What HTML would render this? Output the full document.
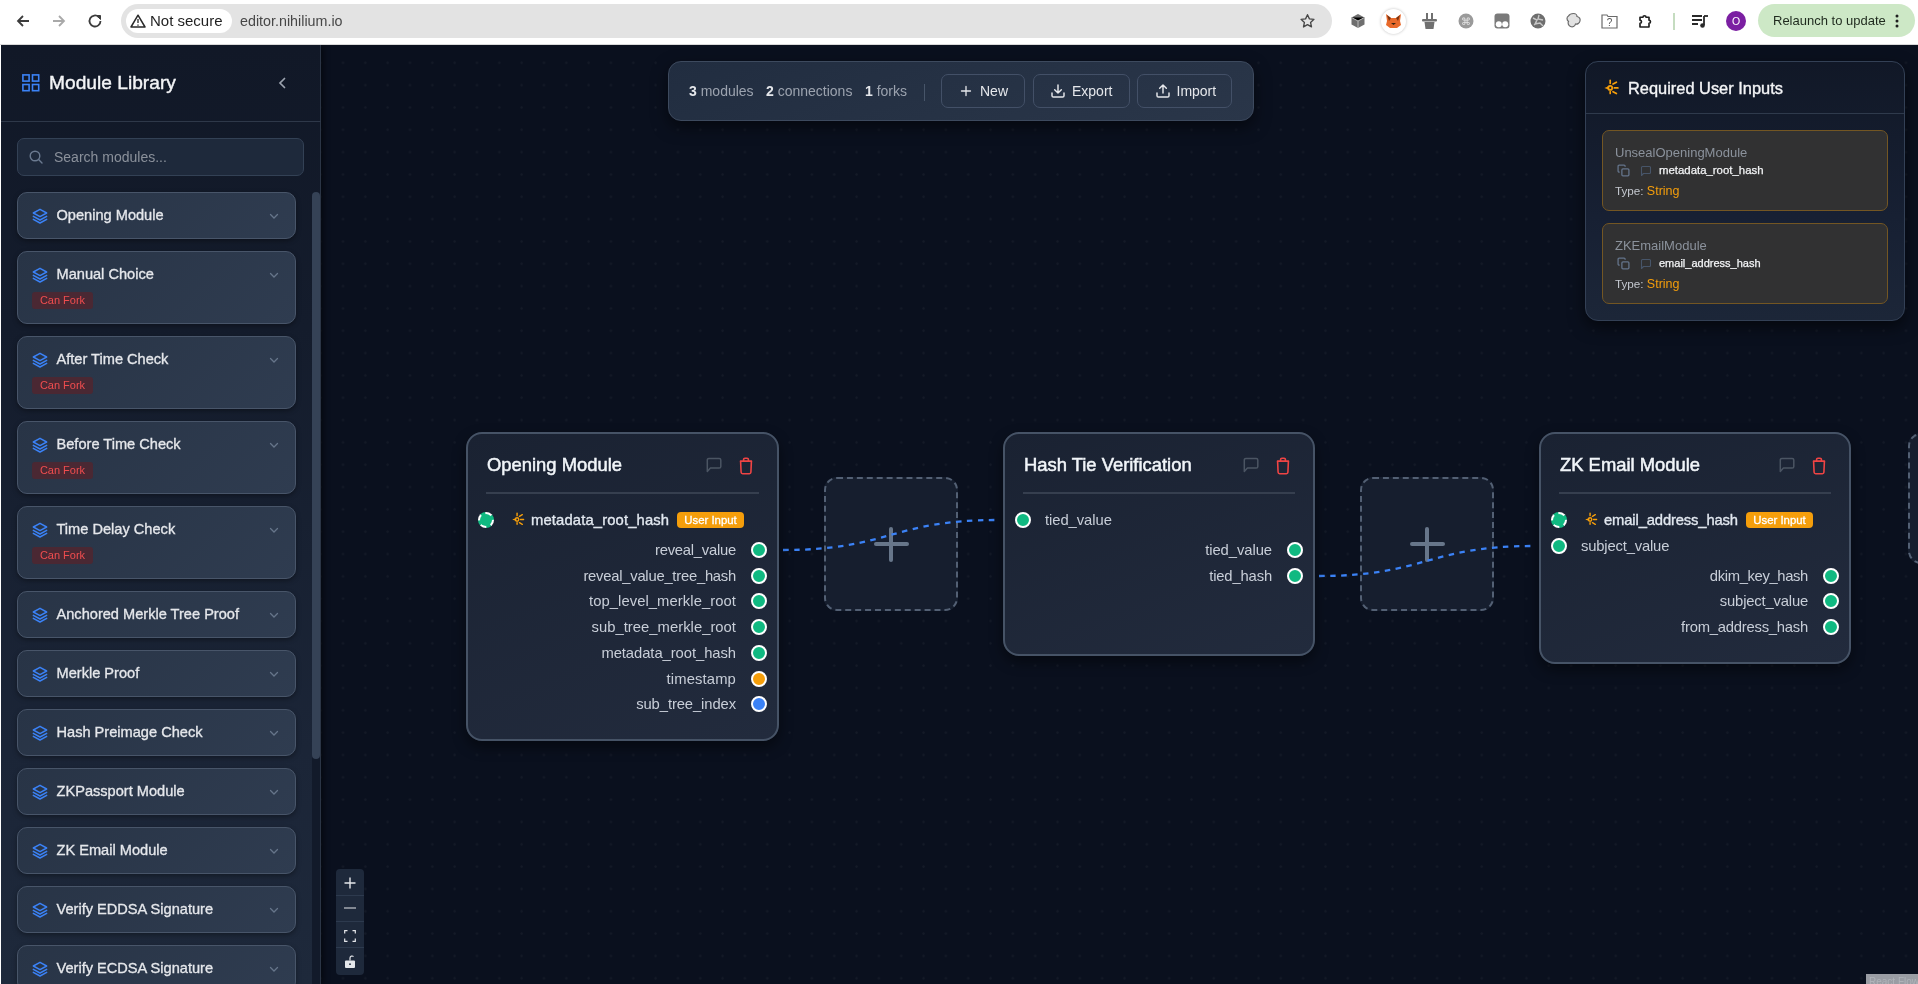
<!DOCTYPE html><html><head><meta charset="utf-8"><style>
*{box-sizing:border-box;margin:0;padding:0}
html,body{width:1918px;height:984px;overflow:hidden;background:#fff;font-family:"Liberation Sans",sans-serif;-webkit-font-smoothing:antialiased}
#chrome,#app{will-change:transform}
.a{position:absolute}
svg{position:absolute;overflow:visible}
#chrome{position:absolute;left:0;top:0;width:1918px;height:44px;background:#fff}
#chline{position:absolute;left:0;top:44px;width:1918px;height:1px;background:#d9d9d9}
#app{position:absolute;left:1px;top:45px;width:1917px;height:939px;background:#0a101e;overflow:hidden}
#canvas{position:absolute;left:320px;top:0;width:1597px;height:939px;background-color:#0a101e;
 background-image:radial-gradient(circle at 1.5px 1.5px,#141a27 0.8px,transparent 1.6px);
 background-size:22.34px 22.34px;background-position:20.5px 16.3px}
#sidebar{position:absolute;left:0;top:0;width:320px;height:939px;background:linear-gradient(#111827 0%,#141c2c 30%,#1b2537 75%,#1e293b 100%);border-right:1px solid #2b3545;box-shadow:3px 0 6px rgba(0,0,0,.45)}
.card{position:absolute;left:16px;width:279px;border:1px solid #485569;border-radius:10px;background:linear-gradient(135deg,#283446,#2f3c50);box-shadow:0 2px 5px rgba(0,0,0,.35)}
.ct{position:absolute;left:38.5px;font-size:14.6px;color:#e5e7eb;white-space:nowrap;-webkit-text-stroke:0.32px #e5e7eb}
.fork{position:absolute;left:14px;width:61px;height:17px;border-radius:3px;background:#4a2833;color:#f04d4f;font-size:11px;line-height:17px;text-align:center}
.node{position:absolute;border:2px solid #465366;border-radius:16px;background:linear-gradient(160deg,#1a2232,#222b3d);box-shadow:0 6px 14px rgba(0,0,0,.45)}
.nt{position:absolute;font-size:18.4px;color:#f1f5f9;white-space:nowrap;line-height:20px;-webkit-text-stroke:0.5px #f1f5f9}
.dv{position:absolute;height:2px;background:#363f4f}
.h{position:absolute;width:16px;height:16px;border-radius:50%;background:#10b981;border:2px solid #fff}
.lbl{position:absolute;font-size:14.8px;color:#c8ced8;white-space:nowrap;line-height:18px}
.lb{color:#e2e8f0;font-size:14.8px;-webkit-text-stroke:0.34px #e2e8f0}
.ui{position:absolute;height:16px;border-radius:4px;background:#f59e0b;color:#fff;font-size:11.4px;line-height:16px;text-align:center;-webkit-text-stroke:0.3px #fff}
.ph{position:absolute;width:134px;height:134px;border:2px dashed #536074;border-radius:13px;background:#161e2e}
.btn{position:absolute;top:12px;height:34px;border:1px solid #435067;border-radius:7px;color:#e5e7eb;font-size:14px;line-height:32px}
</style></head><body>
<div id="chrome">
<svg style="left:15px;top:13px" width="16" height="16" viewBox="0 0 16 16"><path d="M14 8H3M8 3L3 8l5 5" fill="none" stroke="#3c3c3c" stroke-width="1.8"/></svg>
<svg style="left:51px;top:13px" width="16" height="16" viewBox="0 0 16 16"><path d="M2 8h11M8 3l5 5-5 5" fill="none" stroke="#a9a9a9" stroke-width="1.8"/></svg>
<svg style="left:87px;top:13px" width="16" height="16" viewBox="0 0 16 16"><path d="M13.5 8A5.5 5.5 0 1 1 11.8 4" fill="none" stroke="#3c3c3c" stroke-width="1.8"/><path d="M9.5 2.5h4v4z" fill="#3c3c3c" stroke="#3c3c3c" stroke-width="1"/></svg>
<div class="a" style="left:121px;top:4px;width:1211px;height:34px;border-radius:17px;background:#e3e3e3"></div>
<div class="a" style="left:126px;top:9px;width:106px;height:24px;border-radius:12px;background:#fff"></div>
<svg style="left:130px;top:14px" width="16" height="14" viewBox="0 0 16 14"><path d="M8 1.2L15 13H1z" fill="none" stroke="#2a2a2a" stroke-width="1.5" stroke-linejoin="round"/><path d="M8 5v4M8 10.5v1.3" stroke="#2a2a2a" stroke-width="1.3"/></svg>
<div class="a" style="left:150px;top:12px;font-size:15px;color:#1f1f1f;line-height:18px">Not secure</div>
<div class="a" style="left:240px;top:12px;font-size:14.3px;color:#474747;line-height:18px">editor.nihilium.io</div>
<svg style="left:1299px;top:13px" width="17" height="16" viewBox="0 0 24 24"><path d="M12 2.5l2.9 6.3 6.8.7-5.1 4.6 1.4 6.8L12 17.4l-6 3.5 1.4-6.8-5.1-4.6 6.8-.7z" fill="none" stroke="#474747" stroke-width="2" stroke-linejoin="round"/></svg>
<svg style="left:1350px;top:13px" width="16" height="16" viewBox="0 0 16 16"><path d="M8 1l6.5 3.5v7L8 15 1.5 11.5v-7z" fill="#6f6f6f"/><path d="M1.5 4.5L8 8l6.5-3.5M8 8v7" stroke="#bdbdbd" stroke-width="1"/></svg>
<div class="a" style="left:1381px;top:9px;width:25px;height:25px;border-radius:50%;background:#fff;box-shadow:0 0 3px rgba(0,0,0,.25)"></div>
<svg style="left:1385px;top:13px" width="17" height="16" viewBox="0 0 17 16"><path d="M1 1l5 4h5l5-4-1 7 1 4-4 3H5l-4-3 1-4z" fill="#e8692a"/><path d="M2 2l4 3-2 3zM15 2l-4 3 2 3z" fill="#7a3412"/><path d="M6 10l2.5 2 2.5-2" fill="#3a2410"/></svg>
<svg style="left:1421px;top:12px" width="17" height="18" viewBox="0 0 17 18"><path d="M5 1h2v6H5zM10 1h2v6h-2z" fill="#707070"/><rect x="1" y="7" width="15" height="2.5" rx="1" fill="#707070"/><path d="M3.5 10h10l-1 7h-8z" fill="#707070"/></svg>
<svg style="left:1458px;top:13px" width="16" height="16" viewBox="0 0 16 16"><circle cx="8" cy="8" r="7.5" fill="#9a9a9a"/><text x="8" y="12" font-size="10" text-anchor="middle" fill="#e5e5e5" font-family="Liberation Sans">&#8984;</text></svg>
<svg style="left:1494px;top:13px" width="16" height="16" viewBox="0 0 16 16"><rect x="0.5" y="0.5" width="15" height="15" rx="3" fill="#7a7a7a"/><circle cx="4.8" cy="11.2" r="3" fill="#fff"/><circle cx="11.2" cy="11.2" r="3" fill="#fff"/></svg>
<svg style="left:1530px;top:13px" width="16" height="16" viewBox="0 0 16 16"><circle cx="8" cy="8" r="7.5" fill="#6e6e6e"/><path d="M3 5l4 2-2 4 5-1 3 3M9 2l-1 4 5 1M4 12l3-2" stroke="#c8c8c8" stroke-width="1.4" fill="none"/></svg>
<svg style="left:1565px;top:12px" width="17" height="17" viewBox="0 0 17 17"><path d="M8.5 1.5c2.5 0 3.5 2 3.5 3 2.5.5 3.5 2.5 3 4.5-.5 2.5-3 3.5-4.5 3-.5 2.5-3 3.5-5 2.5S2.5 11 3.5 9.5C1.5 8 1.5 5 3.5 4c1-1.8 2.8-2.5 5-2.5z" fill="#e2e2e2" stroke="#6a6a6a" stroke-width="1.2"/></svg>
<svg style="left:1601px;top:12px" width="17" height="17" viewBox="0 0 17 17"><path d="M1 3h5l1 1.5h9V16H1z" fill="none" stroke="#6a6a6a" stroke-width="1.2"/><text x="8.5" y="14" font-size="10" text-anchor="middle" fill="#555" font-family="Liberation Sans">?</text></svg>
<svg style="left:1637px;top:12px" width="18" height="18" viewBox="0 0 24 24"><path d="M4 7h4a2 2 0 1 1 4 0h4v4a2 2 0 1 1 0 4v5H4v-5a2 2 0 1 0 0-4z" fill="none" stroke="#1f1f1f" stroke-width="2.2" stroke-linejoin="round"/></svg>
<div class="a" style="left:1673px;top:13px;width:1.5px;height:17px;background:#c5dcc0"></div>
<svg style="left:1691px;top:13px" width="18" height="16" viewBox="0 0 18 16"><path d="M1 3h10M1 7h10M1 11h6" stroke="#2a2a2a" stroke-width="1.8"/><path d="M13 3v9" stroke="#2a2a2a" stroke-width="1.8"/><circle cx="11.5" cy="12.5" r="2.3" fill="#2a2a2a"/><path d="M13 3h4" stroke="#2a2a2a" stroke-width="1.8"/></svg>
<div class="a" style="left:1726px;top:11px;width:20px;height:20px;border-radius:50%;background:#7b1fa2;color:#fff;font-size:10.5px;line-height:20px;text-align:center">O</div>
<div class="a" style="left:1758px;top:4px;width:157px;height:33px;border-radius:17px;background:#cde8c6"></div>
<div class="a" style="left:1773px;top:13px;font-size:13px;color:#1f2a1e;line-height:16px">Relaunch to update</div>
<svg style="left:1895px;top:14px" width="4" height="14" viewBox="0 0 4 14"><circle cx="2" cy="2" r="1.5" fill="#1f1f1f"/><circle cx="2" cy="7" r="1.5" fill="#1f1f1f"/><circle cx="2" cy="12" r="1.5" fill="#1f1f1f"/></svg>
</div><div id="chline"></div>
<div id="app">
<div id="canvas"></div>
<div id="sidebar">
<svg style="left:21px;top:29px" width="18" height="18" viewBox="0 0 18 18"><g fill="none" stroke="#3b82f6" stroke-width="1.6"><rect x="0.9" y="0.9" width="6.2" height="6.2"/><rect x="10.5" y="0.9" width="6.2" height="6.2"/><rect x="0.9" y="10.5" width="6.2" height="6.2"/><rect x="10.5" y="10.5" width="6.2" height="6.2"/></g></svg>
<div class="a" style="left:48px;top:27px;font-size:19.2px;color:#f3f4f6;line-height:22px;-webkit-text-stroke:0.4px #f3f4f6">Module Library</div>
<svg style="left:276px;top:32px" width="10" height="12" viewBox="0 0 10 12"><path d="M7.5 1.5L3 6l4.5 4.5" fill="none" stroke="#9ca3af" stroke-width="1.7" stroke-linecap="round"/></svg>
<div class="a" style="left:0;top:76px;width:320px;height:1px;background:#2e3849"></div>
<div class="a" style="left:16px;top:93px;width:287px;height:38px;border:1px solid #334155;border-radius:7px;background:#1e293b"></div>
<svg style="left:28px;top:105px" width="14" height="14" viewBox="0 0 14 14"><circle cx="6" cy="6" r="4.8" fill="none" stroke="#6b7a90" stroke-width="1.4"/><path d="M9.6 9.6L13 13" stroke="#6b7a90" stroke-width="1.4" stroke-linecap="round"/></svg>
<div class="a" style="left:53px;top:104px;font-size:14px;color:#8b919b;line-height:16px">Search modules...</div>
<div class="a" style="left:311px;top:147px;width:8px;height:800px;background:#121a2a"></div>
<div class="a" style="left:311px;top:147px;width:8px;height:567px;border-radius:4px;background:#354256"></div>
<div class="card" style="top:147px;height:47px">
<svg style="left:14px;top:15px" width="16" height="16" viewBox="0 0 24 24"><g fill="none" stroke="#3b82f6" stroke-width="2.2" stroke-linecap="round" stroke-linejoin="round"><path d="M12 2L2 7.5 12 13l10-5.5z"/><path d="M2 12.5L12 18l10-5.5"/><path d="M2 17L12 22.5 22 17"/></g></svg>
<div class="ct" style="top:14px;line-height:16px">Opening Module</div>
<svg style="left:251px;top:20px" width="10" height="7" viewBox="0 0 10 7"><path d="M1.5 1.5l3.5 3.5 3.5-3.5" fill="none" stroke="#66758a" stroke-width="1.3" stroke-linecap="round"/></svg>
</div>
<div class="card" style="top:206px;height:73px">
<svg style="left:14px;top:15px" width="16" height="16" viewBox="0 0 24 24"><g fill="none" stroke="#3b82f6" stroke-width="2.2" stroke-linecap="round" stroke-linejoin="round"><path d="M12 2L2 7.5 12 13l10-5.5z"/><path d="M2 12.5L12 18l10-5.5"/><path d="M2 17L12 22.5 22 17"/></g></svg>
<div class="ct" style="top:14px;line-height:16px">Manual Choice</div>
<svg style="left:251px;top:20px" width="10" height="7" viewBox="0 0 10 7"><path d="M1.5 1.5l3.5 3.5 3.5-3.5" fill="none" stroke="#66758a" stroke-width="1.3" stroke-linecap="round"/></svg>
<div class="fork" style="top:40px">Can Fork</div>
</div>
<div class="card" style="top:291px;height:73px">
<svg style="left:14px;top:15px" width="16" height="16" viewBox="0 0 24 24"><g fill="none" stroke="#3b82f6" stroke-width="2.2" stroke-linecap="round" stroke-linejoin="round"><path d="M12 2L2 7.5 12 13l10-5.5z"/><path d="M2 12.5L12 18l10-5.5"/><path d="M2 17L12 22.5 22 17"/></g></svg>
<div class="ct" style="top:14px;line-height:16px">After Time Check</div>
<svg style="left:251px;top:20px" width="10" height="7" viewBox="0 0 10 7"><path d="M1.5 1.5l3.5 3.5 3.5-3.5" fill="none" stroke="#66758a" stroke-width="1.3" stroke-linecap="round"/></svg>
<div class="fork" style="top:40px">Can Fork</div>
</div>
<div class="card" style="top:376px;height:73px">
<svg style="left:14px;top:15px" width="16" height="16" viewBox="0 0 24 24"><g fill="none" stroke="#3b82f6" stroke-width="2.2" stroke-linecap="round" stroke-linejoin="round"><path d="M12 2L2 7.5 12 13l10-5.5z"/><path d="M2 12.5L12 18l10-5.5"/><path d="M2 17L12 22.5 22 17"/></g></svg>
<div class="ct" style="top:14px;line-height:16px">Before Time Check</div>
<svg style="left:251px;top:20px" width="10" height="7" viewBox="0 0 10 7"><path d="M1.5 1.5l3.5 3.5 3.5-3.5" fill="none" stroke="#66758a" stroke-width="1.3" stroke-linecap="round"/></svg>
<div class="fork" style="top:40px">Can Fork</div>
</div>
<div class="card" style="top:461px;height:73px">
<svg style="left:14px;top:15px" width="16" height="16" viewBox="0 0 24 24"><g fill="none" stroke="#3b82f6" stroke-width="2.2" stroke-linecap="round" stroke-linejoin="round"><path d="M12 2L2 7.5 12 13l10-5.5z"/><path d="M2 12.5L12 18l10-5.5"/><path d="M2 17L12 22.5 22 17"/></g></svg>
<div class="ct" style="top:14px;line-height:16px">Time Delay Check</div>
<svg style="left:251px;top:20px" width="10" height="7" viewBox="0 0 10 7"><path d="M1.5 1.5l3.5 3.5 3.5-3.5" fill="none" stroke="#66758a" stroke-width="1.3" stroke-linecap="round"/></svg>
<div class="fork" style="top:40px">Can Fork</div>
</div>
<div class="card" style="top:546px;height:47px">
<svg style="left:14px;top:15px" width="16" height="16" viewBox="0 0 24 24"><g fill="none" stroke="#3b82f6" stroke-width="2.2" stroke-linecap="round" stroke-linejoin="round"><path d="M12 2L2 7.5 12 13l10-5.5z"/><path d="M2 12.5L12 18l10-5.5"/><path d="M2 17L12 22.5 22 17"/></g></svg>
<div class="ct" style="top:14px;line-height:16px">Anchored Merkle Tree Proof</div>
<svg style="left:251px;top:20px" width="10" height="7" viewBox="0 0 10 7"><path d="M1.5 1.5l3.5 3.5 3.5-3.5" fill="none" stroke="#66758a" stroke-width="1.3" stroke-linecap="round"/></svg>
</div>
<div class="card" style="top:605px;height:47px">
<svg style="left:14px;top:15px" width="16" height="16" viewBox="0 0 24 24"><g fill="none" stroke="#3b82f6" stroke-width="2.2" stroke-linecap="round" stroke-linejoin="round"><path d="M12 2L2 7.5 12 13l10-5.5z"/><path d="M2 12.5L12 18l10-5.5"/><path d="M2 17L12 22.5 22 17"/></g></svg>
<div class="ct" style="top:14px;line-height:16px">Merkle Proof</div>
<svg style="left:251px;top:20px" width="10" height="7" viewBox="0 0 10 7"><path d="M1.5 1.5l3.5 3.5 3.5-3.5" fill="none" stroke="#66758a" stroke-width="1.3" stroke-linecap="round"/></svg>
</div>
<div class="card" style="top:664px;height:47px">
<svg style="left:14px;top:15px" width="16" height="16" viewBox="0 0 24 24"><g fill="none" stroke="#3b82f6" stroke-width="2.2" stroke-linecap="round" stroke-linejoin="round"><path d="M12 2L2 7.5 12 13l10-5.5z"/><path d="M2 12.5L12 18l10-5.5"/><path d="M2 17L12 22.5 22 17"/></g></svg>
<div class="ct" style="top:14px;line-height:16px">Hash Preimage Check</div>
<svg style="left:251px;top:20px" width="10" height="7" viewBox="0 0 10 7"><path d="M1.5 1.5l3.5 3.5 3.5-3.5" fill="none" stroke="#66758a" stroke-width="1.3" stroke-linecap="round"/></svg>
</div>
<div class="card" style="top:723px;height:47px">
<svg style="left:14px;top:15px" width="16" height="16" viewBox="0 0 24 24"><g fill="none" stroke="#3b82f6" stroke-width="2.2" stroke-linecap="round" stroke-linejoin="round"><path d="M12 2L2 7.5 12 13l10-5.5z"/><path d="M2 12.5L12 18l10-5.5"/><path d="M2 17L12 22.5 22 17"/></g></svg>
<div class="ct" style="top:14px;line-height:16px">ZKPassport Module</div>
<svg style="left:251px;top:20px" width="10" height="7" viewBox="0 0 10 7"><path d="M1.5 1.5l3.5 3.5 3.5-3.5" fill="none" stroke="#66758a" stroke-width="1.3" stroke-linecap="round"/></svg>
</div>
<div class="card" style="top:782px;height:47px">
<svg style="left:14px;top:15px" width="16" height="16" viewBox="0 0 24 24"><g fill="none" stroke="#3b82f6" stroke-width="2.2" stroke-linecap="round" stroke-linejoin="round"><path d="M12 2L2 7.5 12 13l10-5.5z"/><path d="M2 12.5L12 18l10-5.5"/><path d="M2 17L12 22.5 22 17"/></g></svg>
<div class="ct" style="top:14px;line-height:16px">ZK Email Module</div>
<svg style="left:251px;top:20px" width="10" height="7" viewBox="0 0 10 7"><path d="M1.5 1.5l3.5 3.5 3.5-3.5" fill="none" stroke="#66758a" stroke-width="1.3" stroke-linecap="round"/></svg>
</div>
<div class="card" style="top:841px;height:47px">
<svg style="left:14px;top:15px" width="16" height="16" viewBox="0 0 24 24"><g fill="none" stroke="#3b82f6" stroke-width="2.2" stroke-linecap="round" stroke-linejoin="round"><path d="M12 2L2 7.5 12 13l10-5.5z"/><path d="M2 12.5L12 18l10-5.5"/><path d="M2 17L12 22.5 22 17"/></g></svg>
<div class="ct" style="top:14px;line-height:16px">Verify EDDSA Signature</div>
<svg style="left:251px;top:20px" width="10" height="7" viewBox="0 0 10 7"><path d="M1.5 1.5l3.5 3.5 3.5-3.5" fill="none" stroke="#66758a" stroke-width="1.3" stroke-linecap="round"/></svg>
</div>
<div class="card" style="top:900px;height:47px">
<svg style="left:14px;top:15px" width="16" height="16" viewBox="0 0 24 24"><g fill="none" stroke="#3b82f6" stroke-width="2.2" stroke-linecap="round" stroke-linejoin="round"><path d="M12 2L2 7.5 12 13l10-5.5z"/><path d="M2 12.5L12 18l10-5.5"/><path d="M2 17L12 22.5 22 17"/></g></svg>
<div class="ct" style="top:14px;line-height:16px">Verify ECDSA Signature</div>
<svg style="left:251px;top:20px" width="10" height="7" viewBox="0 0 10 7"><path d="M1.5 1.5l3.5 3.5 3.5-3.5" fill="none" stroke="#66758a" stroke-width="1.3" stroke-linecap="round"/></svg>
</div>
</div>
<div class="ph" style="left:823px;top:432px"></div>
<div class="a" style="left:873px;top:497px;width:35px;height:4px;border-radius:2px;background:#67768a"></div>
<div class="a" style="left:888px;top:482px;width:4px;height:35px;border-radius:2px;background:#67768a"></div>
<div class="ph" style="left:1359px;top:432px"></div>
<div class="a" style="left:1409px;top:497px;width:35px;height:4px;border-radius:2px;background:#67768a"></div>
<div class="a" style="left:1424px;top:482px;width:4px;height:35px;border-radius:2px;background:#67768a"></div>
<div class="a" style="left:1907px;top:388px;width:60px;height:131px;border:2px dashed #536074;border-radius:13px;background:#161e2e"></div>
<svg style="left:0;top:0" width="1917" height="939"><g fill="none" stroke="#3b82f6" stroke-width="2.3" stroke-dasharray="5.5 5.5"><path d="M782,505 C889.5,505 889.5,475 997,475"/><path d="M1318,531 C1425.5,531 1425.5,501 1533,501"/></g></svg>
<div class="node" style="left:465px;top:387px;width:313px;height:309px"></div>
<div class="nt" style="left:486px;top:410px">Opening Module</div>
<svg style="left:705px;top:412px" width="16" height="16" viewBox="0 0 16 16"><path d="M1.3 14.5V3a1.6 1.6 0 0 1 1.6-1.6h10.3A1.6 1.6 0 0 1 14.8 3v6.4a1.6 1.6 0 0 1-1.6 1.6H4.4z" fill="none" stroke="#4b5563" stroke-width="1.5" stroke-linejoin="round"/></svg>
<svg style="left:738px;top:412px" width="14" height="18" viewBox="0 0 14 18"><g fill="none" stroke="#ef4444" stroke-width="1.6" stroke-linejoin="round"><path d="M1.6 4.3h10.8l-.5 11a1.5 1.5 0 0 1-1.5 1.4H3.6a1.5 1.5 0 0 1-1.5-1.4z"/><path d="M0.9 4.3h12.2M4.6 4.3V2.6a1.3 1.3 0 0 1 1.3-1.3h2.2a1.3 1.3 0 0 1 1.3 1.3v1.7"/></g></svg>
<div class="dv" style="left:485px;top:447px;width:273px"></div>
<div class="h" style="left:477px;top:467px;border-style:dashed"></div>
<svg style="left:510px;top:467px" width="13.5" height="13.5" viewBox="0 0 16 16"><g stroke="#f59e0b" stroke-width="1.7" stroke-linecap="round" fill="none"><circle cx="7.2" cy="8.9" r="2"/><path d="M7.2 1.3v3M7.2 12.6v1.9M11.3 8.9h3.6M10 5.1l3.4-1.9M10 12.7l3.4 1.9"/></g><path d="M6.2 7.1L1.4 8.9L6.2 10.7z" fill="#f59e0b"/></svg>
<div class="lbl lb" style="left:530px;top:466px;letter-spacing:0.137px">metadata_root_hash</div>
<div class="ui" style="left:676px;top:467px;width:67px">User Input</div>
<div class="h" style="left:750px;top:497px;background:#10b981"></div>
<div class="lbl" style="right:1182px;top:496px;letter-spacing:-0.245px">reveal_value</div>
<div class="h" style="left:750px;top:523px;background:#10b981"></div>
<div class="lbl" style="right:1182px;top:522px;letter-spacing:-0.243px">reveal_value_tree_hash</div>
<div class="h" style="left:750px;top:548px;background:#10b981"></div>
<div class="lbl" style="right:1182px;top:547px;letter-spacing:0.068px">top_level_merkle_root</div>
<div class="h" style="left:750px;top:574px;background:#10b981"></div>
<div class="lbl" style="right:1182px;top:573px;letter-spacing:0.026px">sub_tree_merkle_root</div>
<div class="h" style="left:750px;top:600px;background:#10b981"></div>
<div class="lbl" style="right:1182px;top:599px;letter-spacing:-0.063px">metadata_root_hash</div>
<div class="h" style="left:750px;top:626px;background:#f59e0b"></div>
<div class="lbl" style="right:1182px;top:625px;letter-spacing:0.134px">timestamp</div>
<div class="h" style="left:750px;top:651px;background:#3b82f6"></div>
<div class="lbl" style="right:1182px;top:650px;letter-spacing:-0.099px">sub_tree_index</div>
<div class="node" style="left:1002px;top:387px;width:312px;height:224px"></div>
<div class="nt" style="left:1023px;top:410px">Hash Tie Verification</div>
<svg style="left:1242px;top:412px" width="16" height="16" viewBox="0 0 16 16"><path d="M1.3 14.5V3a1.6 1.6 0 0 1 1.6-1.6h10.3A1.6 1.6 0 0 1 14.8 3v6.4a1.6 1.6 0 0 1-1.6 1.6H4.4z" fill="none" stroke="#4b5563" stroke-width="1.5" stroke-linejoin="round"/></svg>
<svg style="left:1275px;top:412px" width="14" height="18" viewBox="0 0 14 18"><g fill="none" stroke="#ef4444" stroke-width="1.6" stroke-linejoin="round"><path d="M1.6 4.3h10.8l-.5 11a1.5 1.5 0 0 1-1.5 1.4H3.6a1.5 1.5 0 0 1-1.5-1.4z"/><path d="M0.9 4.3h12.2M4.6 4.3V2.6a1.3 1.3 0 0 1 1.3-1.3h2.2a1.3 1.3 0 0 1 1.3 1.3v1.7"/></g></svg>
<div class="dv" style="left:1022px;top:447px;width:272px"></div>
<div class="h" style="left:1014px;top:467px"></div>
<div class="lbl" style="left:1044px;top:466px;letter-spacing:-0.065px">tied_value</div>
<div class="h" style="left:1286px;top:497px;background:#10b981"></div>
<div class="lbl" style="right:646px;top:496px;letter-spacing:-0.065px">tied_value</div>
<div class="h" style="left:1286px;top:523px;background:#10b981"></div>
<div class="lbl" style="right:646px;top:522px;letter-spacing:-0.152px">tied_hash</div>
<div class="node" style="left:1538px;top:387px;width:312px;height:232px"></div>
<div class="nt" style="left:1559px;top:410px">ZK Email Module</div>
<svg style="left:1778px;top:412px" width="16" height="16" viewBox="0 0 16 16"><path d="M1.3 14.5V3a1.6 1.6 0 0 1 1.6-1.6h10.3A1.6 1.6 0 0 1 14.8 3v6.4a1.6 1.6 0 0 1-1.6 1.6H4.4z" fill="none" stroke="#4b5563" stroke-width="1.5" stroke-linejoin="round"/></svg>
<svg style="left:1811px;top:412px" width="14" height="18" viewBox="0 0 14 18"><g fill="none" stroke="#ef4444" stroke-width="1.6" stroke-linejoin="round"><path d="M1.6 4.3h10.8l-.5 11a1.5 1.5 0 0 1-1.5 1.4H3.6a1.5 1.5 0 0 1-1.5-1.4z"/><path d="M0.9 4.3h12.2M4.6 4.3V2.6a1.3 1.3 0 0 1 1.3-1.3h2.2a1.3 1.3 0 0 1 1.3 1.3v1.7"/></g></svg>
<div class="dv" style="left:1558px;top:447px;width:272px"></div>
<div class="h" style="left:1550px;top:467px;border-style:dashed"></div>
<svg style="left:1583px;top:467px" width="13.5" height="13.5" viewBox="0 0 16 16"><g stroke="#f59e0b" stroke-width="1.7" stroke-linecap="round" fill="none"><circle cx="7.2" cy="8.9" r="2"/><path d="M7.2 1.3v3M7.2 12.6v1.9M11.3 8.9h3.6M10 5.1l3.4-1.9M10 12.7l3.4 1.9"/></g><path d="M6.2 7.1L1.4 8.9L6.2 10.7z" fill="#f59e0b"/></svg>
<div class="lbl lb" style="left:1603px;top:466px;letter-spacing:-0.144px">email_address_hash</div>
<div class="ui" style="left:1745px;top:467px;width:67px">User Input</div>
<div class="h" style="left:1550px;top:493px"></div>
<div class="lbl" style="left:1580px;top:492px;letter-spacing:-0.176px">subject_value</div>
<div class="h" style="left:1822px;top:523px;background:#10b981"></div>
<div class="lbl" style="right:110px;top:522px;letter-spacing:-0.358px">dkim_key_hash</div>
<div class="h" style="left:1822px;top:548px;background:#10b981"></div>
<div class="lbl" style="right:110px;top:547px;letter-spacing:-0.176px">subject_value</div>
<div class="h" style="left:1822px;top:574px;background:#10b981"></div>
<div class="lbl" style="right:110px;top:573px;letter-spacing:-0.228px">from_address_hash</div>
<div class="a" style="left:667px;top:16px;width:586px;height:60px;border:1px solid #3d4a5e;border-radius:13px;background:linear-gradient(160deg,#212d40,#2a3649);box-shadow:0 6px 16px rgba(0,0,0,.5)">
<div class="a" style="left:20px;top:21px;font-size:14px;color:#9ca3af;line-height:16px;white-space:nowrap"><b style="color:#e5e7eb">3</b> modules</div>
<div class="a" style="left:97px;top:21px;font-size:14px;color:#9ca3af;line-height:16px;white-space:nowrap"><b style="color:#e5e7eb">2</b> connections</div>
<div class="a" style="left:196px;top:21px;font-size:14px;color:#9ca3af;line-height:16px;white-space:nowrap"><b style="color:#e5e7eb">1</b> forks</div>
<div class="a" style="left:255px;top:22px;width:1px;height:17px;background:#475569"></div>
<div class="btn" style="left:272px;width:84px"></div>
<svg style="left:291.5px;top:24px" width="10" height="10" viewBox="0 0 10 10"><path d="M5 0.5v9M0.5 5h9" stroke="#e5e7eb" stroke-width="1.3" stroke-linecap="round"/></svg>
<div class="a" style="left:311px;top:21px;font-size:14px;color:#e5e7eb;line-height:16px">New</div>
<div class="btn" style="left:364px;width:97px"></div>
<svg style="left:380.5px;top:21px" width="16" height="16" viewBox="0 0 24 24"><g fill="none" stroke="#e5e7eb" stroke-width="2.2" stroke-linecap="round" stroke-linejoin="round"><path d="M21 15v4a2 2 0 0 1-2 2H5a2 2 0 0 1-2-2v-4"/><path d="M7 10l5 5 5-5M12 15V3"/></g></svg>
<div class="a" style="left:403px;top:21px;font-size:14px;color:#e5e7eb;line-height:16px">Export</div>
<div class="btn" style="left:468px;width:95px"></div>
<svg style="left:485.5px;top:21px" width="16" height="16" viewBox="0 0 24 24"><g fill="none" stroke="#e5e7eb" stroke-width="2.2" stroke-linecap="round" stroke-linejoin="round"><path d="M21 15v4a2 2 0 0 1-2 2H5a2 2 0 0 1-2-2v-4"/><path d="M17 8l-5-5-5 5M12 3v12"/></g></svg>
<div class="a" style="left:507.5px;top:21px;font-size:14px;color:#e5e7eb;line-height:16px">Import</div>
</div>
<div class="a" style="left:1584px;top:16px;width:320px;height:260px;border:1px solid #334055;border-radius:13px;background:linear-gradient(#111827,#172033 60%,#1c2638);overflow:hidden;box-shadow:0 6px 16px rgba(0,0,0,.55)">
<div class="a" style="left:0;top:51px;width:320px;height:1px;background:#2f3a4c"></div>
<svg style="left:17px;top:17px" width="16" height="16" viewBox="0 0 16 16"><g stroke="#f59e0b" stroke-width="1.7" stroke-linecap="round" fill="none"><circle cx="7.2" cy="8.9" r="2"/><path d="M7.2 1.3v3M7.2 12.6v1.9M11.3 8.9h3.6M10 5.1l3.4-1.9M10 12.7l3.4 1.9"/></g><path d="M6.2 7.1L1.4 8.9L6.2 10.7z" fill="#f59e0b"/></svg>
<div class="a" style="left:42px;top:17px;font-size:16.4px;color:#f3f4f6;line-height:18px;-webkit-text-stroke:0.36px #f3f4f6">Required User Inputs</div>
<div class="a" style="left:16px;top:68px;width:286px;height:81px;border:1px solid #735623;border-radius:7px;background:#313132"></div>
<div class="a" style="left:29px;top:83px;font-size:13px;color:#8b929c;line-height:16px">UnsealOpeningModule</div>
<svg style="left:31px;top:102px" width="13" height="13" viewBox="0 0 24 24"><g fill="none" stroke="#64748b" stroke-width="2.4" stroke-linejoin="round"><rect x="9" y="9" width="13" height="13" rx="2"/><path d="M5 15H4a2 2 0 0 1-2-2V4a2 2 0 0 1 2-2h9a2 2 0 0 1 2 2v1"/></g></svg>
<svg style="left:54px;top:103px" width="12" height="12" viewBox="0 0 24 24"><path d="M21 15a2 2 0 0 1-2 2H7l-4 4V5a2 2 0 0 1 2-2h14a2 2 0 0 1 2 2z" fill="none" stroke="#475569" stroke-width="2.2" stroke-linejoin="round"/></svg>
<div class="a" style="left:73px;top:101px;font-size:11.4px;color:#f3f4f6;line-height:14px;-webkit-text-stroke:0.25px #f3f4f6">metadata_root_hash</div>
<div class="a" style="left:29px;top:121px;font-size:11.7px;color:#c4c8cf;line-height:16px;white-space:nowrap">Type: <span style="color:#f59e0b;font-size:12.5px">String</span></div>
<div class="a" style="left:16px;top:161px;width:286px;height:81px;border:1px solid #735623;border-radius:7px;background:#313132"></div>
<div class="a" style="left:29px;top:176px;font-size:13px;color:#8b929c;line-height:16px">ZKEmailModule</div>
<svg style="left:31px;top:195px" width="13" height="13" viewBox="0 0 24 24"><g fill="none" stroke="#64748b" stroke-width="2.4" stroke-linejoin="round"><rect x="9" y="9" width="13" height="13" rx="2"/><path d="M5 15H4a2 2 0 0 1-2-2V4a2 2 0 0 1 2-2h9a2 2 0 0 1 2 2v1"/></g></svg>
<svg style="left:54px;top:196px" width="12" height="12" viewBox="0 0 24 24"><path d="M21 15a2 2 0 0 1-2 2H7l-4 4V5a2 2 0 0 1 2-2h14a2 2 0 0 1 2 2z" fill="none" stroke="#475569" stroke-width="2.2" stroke-linejoin="round"/></svg>
<div class="a" style="left:73px;top:194px;font-size:11px;color:#f3f4f6;line-height:14px;-webkit-text-stroke:0.25px #f3f4f6">email_address_hash</div>
<div class="a" style="left:29px;top:214px;font-size:11.7px;color:#c4c8cf;line-height:16px;white-space:nowrap">Type: <span style="color:#f59e0b;font-size:12.5px">String</span></div>
</div>
<div class="a" style="left:335px;top:824px;width:28px;height:106px;border-radius:4px;background:#1e293b;overflow:hidden">
<div class="a" style="left:0;top:26px;width:28px;height:1px;background:#2d3a4e"></div>
<div class="a" style="left:0;top:52px;width:28px;height:1px;background:#2d3a4e"></div>
<div class="a" style="left:0;top:78px;width:28px;height:1px;background:#2d3a4e"></div>
<svg style="left:8px;top:8px" width="12" height="12" viewBox="0 0 12 12"><path d="M6 0.5v11M0.5 6h11" stroke="#e5e7eb" stroke-width="1.4"/></svg>
<svg style="left:8px;top:38px" width="12" height="2" viewBox="0 0 12 2"><path d="M0 1h12" stroke="#e5e7eb" stroke-width="1.1"/></svg>
<svg style="left:8px;top:61px" width="12" height="12" viewBox="0 0 12 12"><path d="M0.7 3.5V0.7h2.8M8.5 0.7h2.8v2.8M11.3 8.5v2.8H8.5M3.5 11.3H0.7V8.5" fill="none" stroke="#e5e7eb" stroke-width="1.2"/></svg>
<svg style="left:8px;top:86px" width="12" height="14" viewBox="0 0 12 14"><path d="M6 5.5V3a2 2 0 0 1 3.5-1.3" fill="none" stroke="#e5e7eb" stroke-width="1.2"/><rect x="1" y="5.5" width="10" height="7.5" rx="1" fill="#e5e7eb"/><circle cx="6" cy="9.2" r="0.9" fill="#1e293b"/></svg>
</div>
<div class="a" style="left:1865px;top:929px;width:60px;height:14px;background:#9a9da4;color:#b0b3b9;font-size:10px;line-height:16px;padding-left:3px">React Flow</div>
</div>
</body></html>
